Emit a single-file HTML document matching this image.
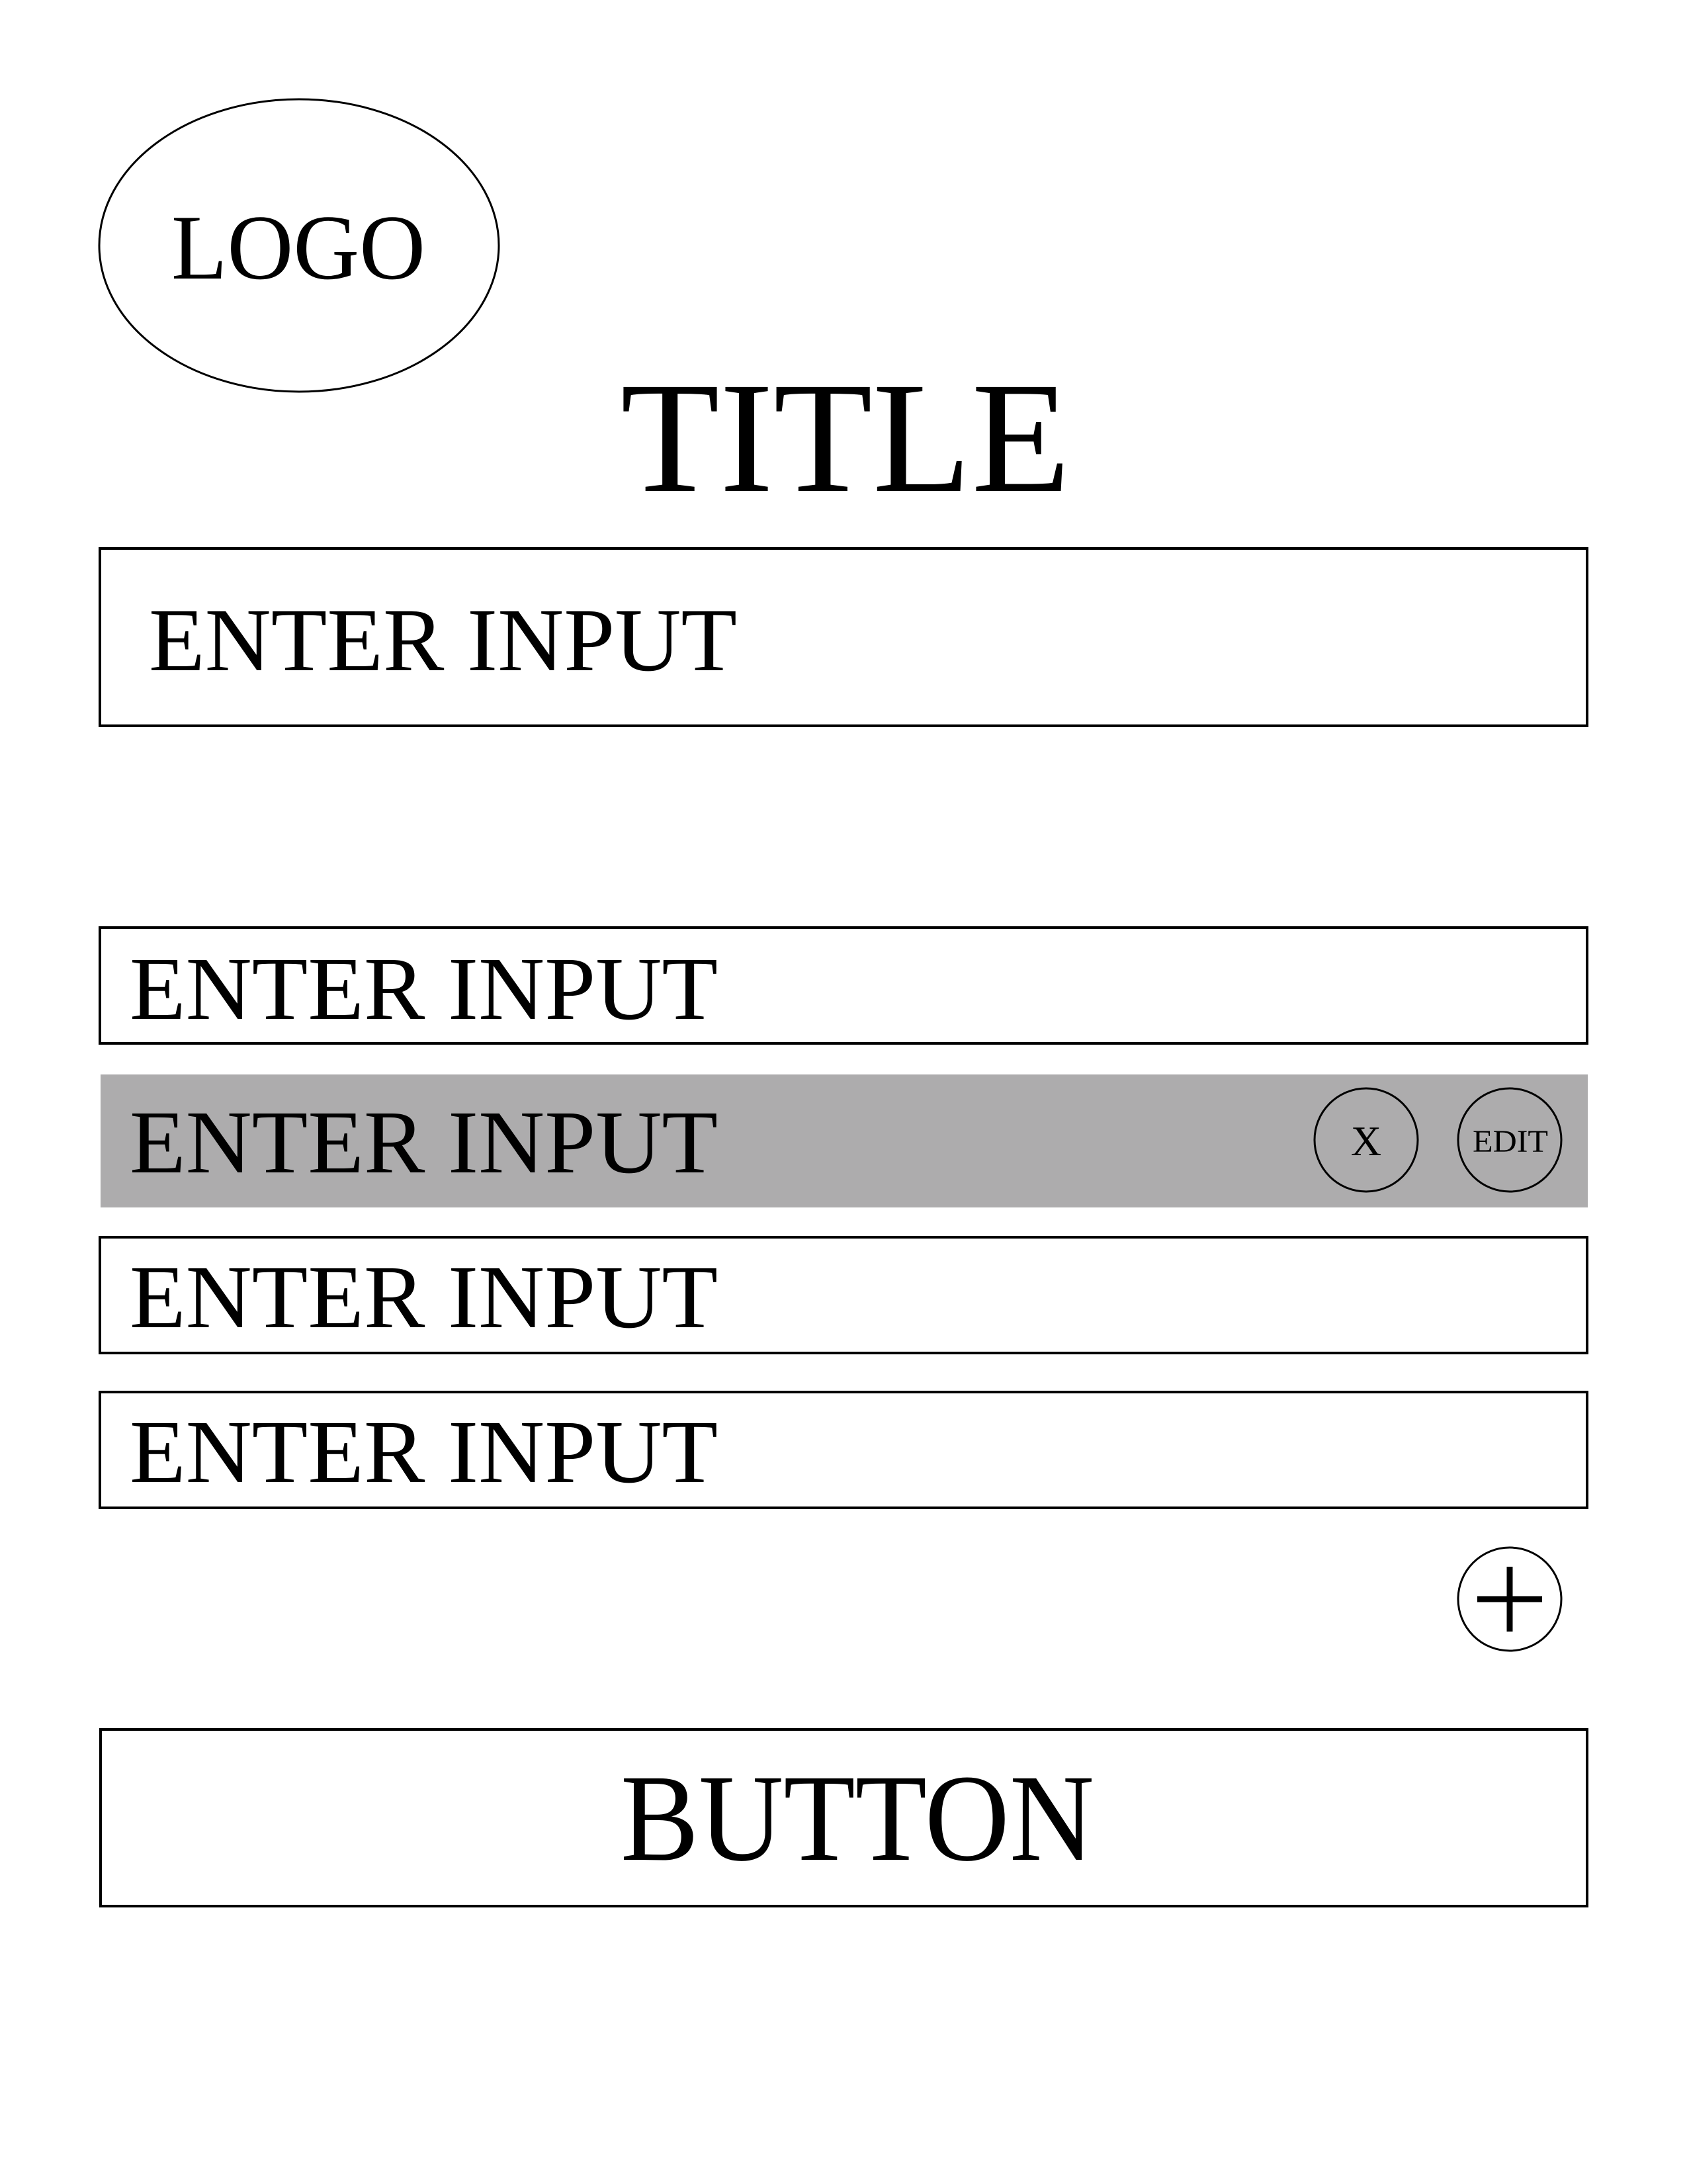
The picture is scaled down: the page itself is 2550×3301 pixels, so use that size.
<!DOCTYPE html>
<html><head><meta charset="utf-8"><style>
html,body{margin:0;padding:0;background:#fff;}
svg{display:block;}
text{font-family:"Liberation Serif",serif;fill:#000;}
</style></head><body>
<svg width="2550" height="3301" viewBox="0 0 2550 3301" xmlns="http://www.w3.org/2000/svg">
<rect width="2550" height="3301" fill="#fff"/>
<ellipse cx="452" cy="371" rx="302" ry="221" fill="none" stroke="#000" stroke-width="3"/>
<text x="259" y="421" font-size="140" textLength="384" lengthAdjust="spacingAndGlyphs">LOGO</text>
<text x="938" y="742" font-size="240" textLength="680" lengthAdjust="spacingAndGlyphs">TITLE</text>

<rect x="151" y="829" width="2248" height="268" fill="none" stroke="#000" stroke-width="4"/>
<text x="225" y="1013" font-size="136" textLength="889" lengthAdjust="spacingAndGlyphs">ENTER INPUT</text>

<rect x="151" y="1402" width="2248" height="175" fill="none" stroke="#000" stroke-width="4"/>
<text x="196" y="1540" font-size="136" textLength="889" lengthAdjust="spacingAndGlyphs">ENTER INPUT</text>

<rect x="152" y="1624" width="2248" height="201" fill="#adacad"/>
<text x="196" y="1772" font-size="136" textLength="889" lengthAdjust="spacingAndGlyphs">ENTER INPUT</text>
<circle cx="2065" cy="1723" r="78" fill="none" stroke="#000" stroke-width="3"/>
<text x="2065" y="1746" font-size="64" text-anchor="middle">X</text>
<circle cx="2282" cy="1723" r="78" fill="none" stroke="#000" stroke-width="3"/>
<text x="2283" y="1741" font-size="48" text-anchor="middle" textLength="114" lengthAdjust="spacingAndGlyphs">EDIT</text>

<rect x="151" y="1870" width="2248" height="175" fill="none" stroke="#000" stroke-width="4"/>
<text x="196" y="2006" font-size="136" textLength="889" lengthAdjust="spacingAndGlyphs">ENTER INPUT</text>

<rect x="151" y="2104" width="2248" height="175" fill="none" stroke="#000" stroke-width="4"/>
<text x="196" y="2240" font-size="136" textLength="889" lengthAdjust="spacingAndGlyphs">ENTER INPUT</text>

<circle cx="2282" cy="2417" r="78" fill="none" stroke="#000" stroke-width="3"/>
<path d="M2282 2368 V2466 M2233 2417 H2331" stroke="#000" stroke-width="9"/>

<rect x="152" y="2614" width="2247" height="267" fill="none" stroke="#000" stroke-width="4"/>
<text x="938" y="2811" font-size="188" textLength="716" lengthAdjust="spacingAndGlyphs">BUTTON</text>
</svg>
</body></html>
